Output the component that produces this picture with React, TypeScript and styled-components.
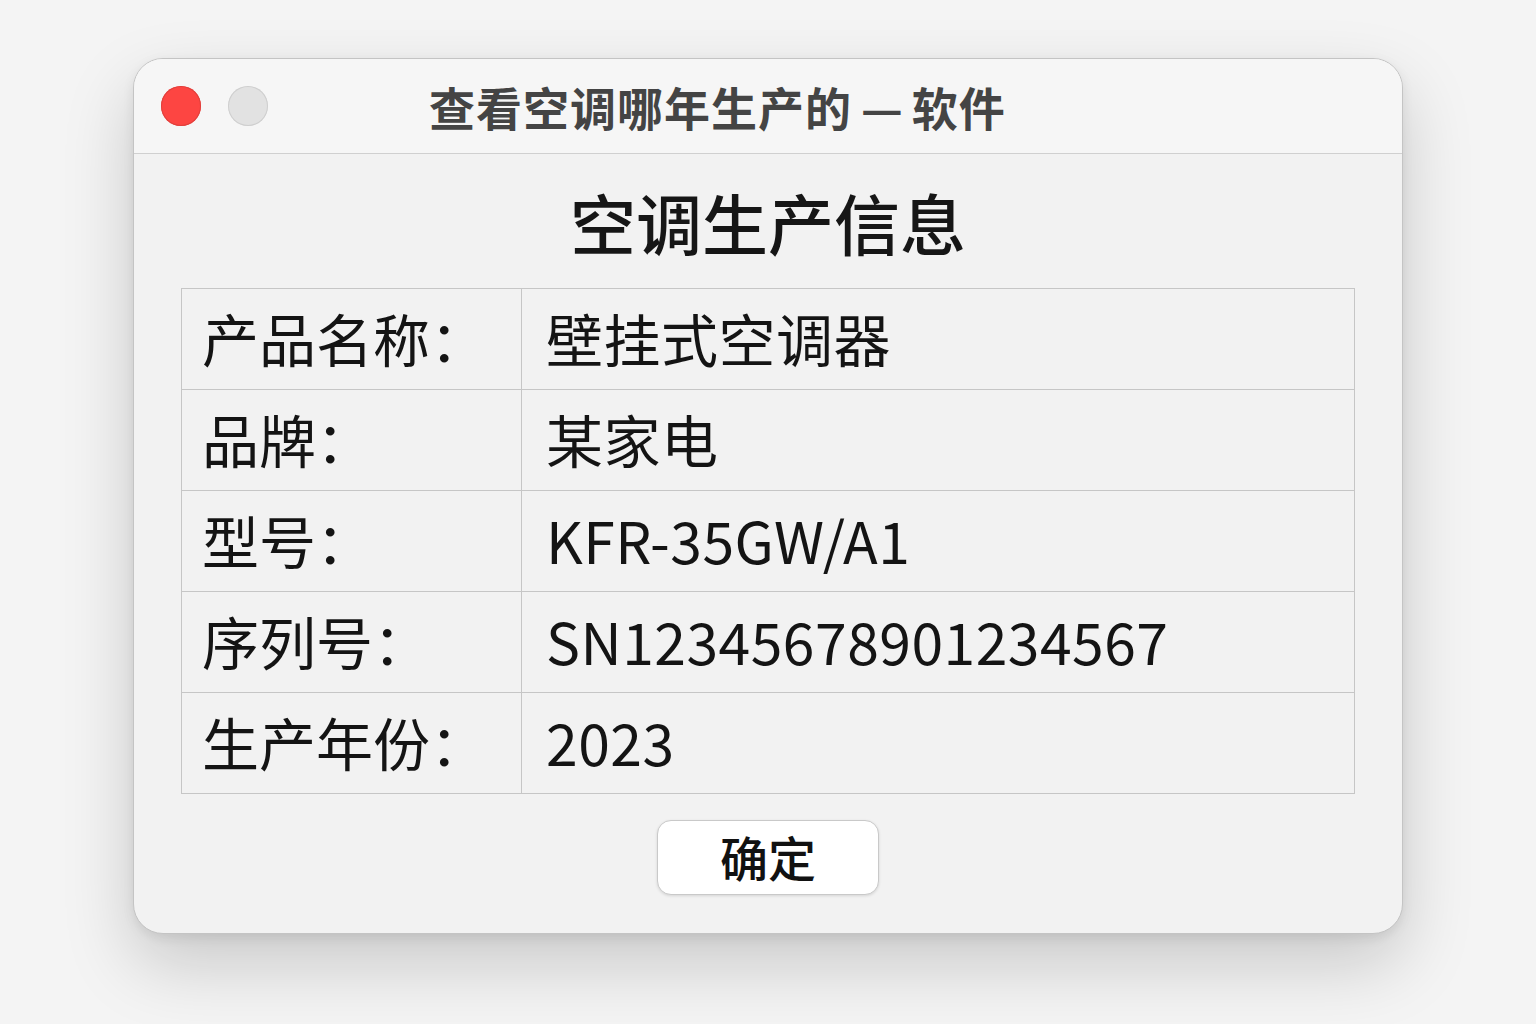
import React from 'react';
import styled, { createGlobalStyle } from 'styled-components';

const GlobalStyle = createGlobalStyle`
  html, body {
    margin: 0;
    padding: 0;
    background: #f4f4f4;
    font-family: "Noto Sans CJK SC", "Noto Sans", sans-serif;
  }
`;

const Page = styled.div`
  display: flex;
  justify-content: center;
  padding-top: 58px;
  height: 1024px;
  box-sizing: border-box;
`;

const Window = styled.div`
  width: 1270px;
  height: 876px;
  box-sizing: border-box;
  background: #f2f2f2;
  border: 1px solid #c4c4c4;
  border-radius: 30px;
  box-shadow: 0 30px 70px rgba(0, 0, 0, 0.18), 0 4px 12px rgba(0, 0, 0, 0.08);
  overflow: hidden;
  display: flex;
  flex-direction: column;
`;

const TitleBar = styled.div`
  height: 95px;
  flex: none;
  box-sizing: border-box;
  display: flex;
  align-items: center;
  padding-left: 27px;
  background: #f6f6f6;
  border-bottom: 1px solid #d0d0d0;
`;

const Light = styled.span<{ $color: string; $edge: string }>`
  width: 40px;
  height: 40px;
  border-radius: 50%;
  background: ${(p) => p.$color};
  box-shadow: inset 0 0 0 1px ${(p) => p.$edge};
  margin-right: 27px;
  flex: none;
`;

const Title = styled.div`
  margin-left: 134px;
  font-size: 46px;
  font-weight: 700;
  color: #444444;
  letter-spacing: 1px;
`;

const Dash = styled.span`
  display: inline-block;
  font-size: 46px;
  margin: 0 9px 0 9px;
  letter-spacing: 0;
`;

const Body = styled.div`
  flex: 1;
  display: flex;
  flex-direction: column;
  align-items: center;
  padding: 0 47px;
`;

const Heading = styled.h1`
  margin: 30px 0 29px;
  font-size: 66px;
  line-height: 75px;
  font-weight: 500;
  color: #161616;
`;

const Table = styled.div`
  align-self: stretch;
  display: grid;
  grid-template-columns: 340px 1fr;
  border: 1px solid #c6c6c6;
  border-bottom: none;
  border-right: none;
`;

const Cell = styled.div<{ $value?: boolean }>`
  height: 101px;
  box-sizing: border-box;
  display: flex;
  align-items: center;
  padding-left: ${(p) => (p.$value ? '24px' : '20px')};
  padding-bottom: 4px;
  border-right: 1px solid #c6c6c6;
  border-bottom: 1px solid #c6c6c6;
  font-size: 57px;
  letter-spacing: ${(p) => (p.$value ? '0.5px' : '0')};
  color: #141414;
  background: #f2f2f2;
`;

const Button = styled.button`
  margin-top: 26px;
  width: 222px;
  height: 75px;
  border-radius: 14px;
  border: 1px solid #c9c9c9;
  background: #ffffff;
  box-shadow: 0 1px 3px rgba(0, 0, 0, 0.12);
  font-family: "Noto Sans CJK SC", "Noto Sans", sans-serif;
  font-size: 48px;
  font-weight: 500;
  color: #111111;
  padding: 0 0 4px;
`;

const rows: [string, string][] = [
  ['产品名称：', '壁挂式空调器'],
  ['品牌：', '某家电'],
  ['型号：', 'KFR-35GW/A1'],
  ['序列号：', 'SN12345678901234567'],
  ['生产年份：', '2023'],
];

const App: React.FC = () => (
  <>
    <GlobalStyle />
    <Page>
      <Window>
        <TitleBar>
          <Light $color="#fd4542" $edge="#e0403c" />
          <Light $color="#e2e2e2" $edge="#cfcfcf" />
          <Title>
            查看空调哪年生产的<Dash>—</Dash>软件
          </Title>
        </TitleBar>
        <Body>
          <Heading>空调生产信息</Heading>
          <Table>
            {rows.map(([label, value]) => (
              <React.Fragment key={label}>
                <Cell>{label}</Cell>
                <Cell $value>{value}</Cell>
              </React.Fragment>
            ))}
          </Table>
          <Button>确定</Button>
        </Body>
      </Window>
    </Page>
  </>
);

export default App;
